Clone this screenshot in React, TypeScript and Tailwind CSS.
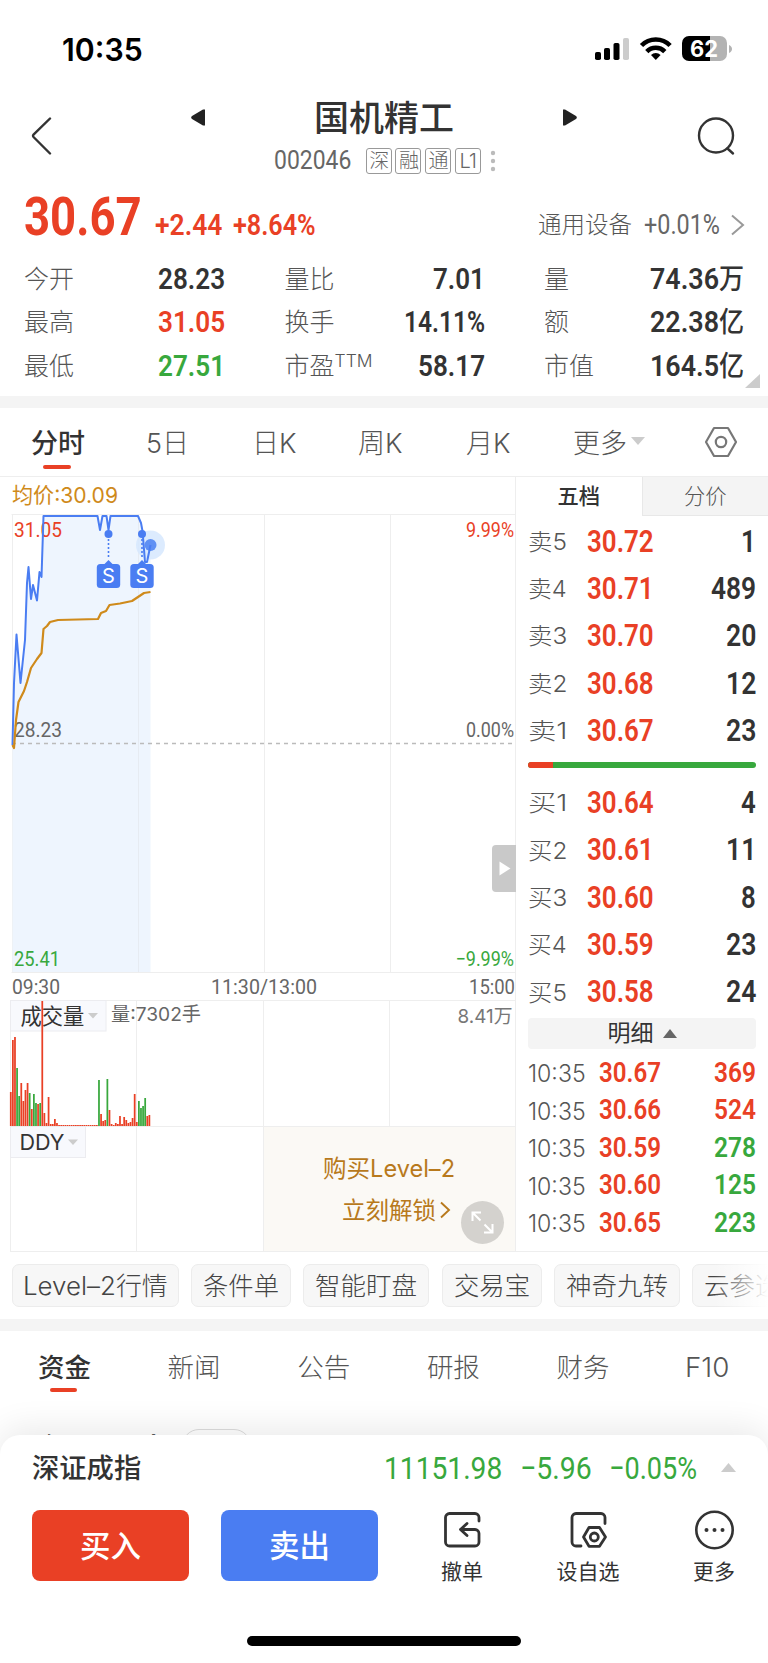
import clsx from 'clsx';
import { ReactNode, useLayoutEffect, useRef } from 'react';

const RED = '#e94025';
const GREEN = '#38a83d';
const BLUE = '#4a7df2';
const GOLD = '#cf8a1b';
const GRID = '#eeeeee';

interface FitProps {
  children: ReactNode;
  className?: string;
}

// 将文字横向缩放到容器宽度，模拟窄体数字
function Fit({ children, className }: FitProps) {
  const ref = useRef<HTMLSpanElement>(null);

  useLayoutEffect(() => {
    const fit = () => {
      const el = ref.current;
      if (!el || !el.parentElement || !el.offsetWidth) return;
      el.style.transform = `scaleX(${el.parentElement.clientWidth / el.offsetWidth})`;
    };
    fit();
    document.fonts?.ready.then(fit);
  }, []);

  return (
    <span className={clsx('flex shrink-0 leading-none whitespace-nowrap', className)}>
      <span ref={ref} className="inline-block shrink-0 origin-left">
        {children}
      </span>
    </span>
  );
}

const num = "font-['Roboto','Noto_Sans_CJK_SC',sans-serif]";

function StatusBar() {
  return (
    <div className="flex h-[97px] items-center justify-between pr-[36px] pl-[62px]">
      <Fit className="mt-[1px] w-[81px] text-[31px] font-semibold text-black">10:35</Fit>
      <svg width="138" height="26" viewBox="594 36 138 26">
        <rect x="595" y="52" width="6" height="8" rx="1.8" />
        <rect x="604" y="48" width="6" height="12" rx="1.8" />
        <rect x="613.5" y="43" width="6" height="17" rx="1.8" />
        <rect x="623" y="38" width="6" height="22" rx="1.8" fill="#cccccc" />
        <g fill="none" stroke="#000" strokeWidth="4.6">
          <path d="M641.5 45.500a20 20 0 0 1 28.600 0" />
          <path d="M646.800 51.600a12.600 12.600 0 0 1 18 0" />
        </g>
        <path d="M655.800 60l-4.800-5a7 7 0 0 1 9.600 0z" />
        <path d="M689 36h21v25h-21a7 7 0 0 1-7-7v-11a7 7 0 0 1 7-7z" />
        <path d="M710 36h10a7 7 0 0 1 7 7v11a7 7 0 0 1-7 7h-10z" fill="#b3b3b3" />
        <path d="M729 45c4 1.500 4 6.500 0 8z" fill="#b3b3b3" />
        <text x="690" y="56.800" fill="#fff" fontSize="22.500" fontWeight="700" textLength="28" lengthAdjust="spacingAndGlyphs">62</text>
      </svg>
    </div>
  );
}

function Header() {
  return (
    <header className="flex h-[87px] items-start justify-between pr-[31px] pl-[31px]">
      <div className="w-[40px] pt-[20px]">
        <svg width="22" height="40" viewBox="0 0 22 40" fill="none" stroke="#333" strokeWidth="2.400" strokeLinecap="round" strokeLinejoin="round">
          <path d="M19 1.500L2.500 17.700a1.600 1.600 0 0 0 0 2.300L19 36.500" />
        </svg>
      </div>
      <div className="flex w-[440px] flex-col items-center">
        <div className="flex h-[40px] w-full items-center justify-between px-[27px]">
          <svg width="15" height="17" viewBox="0 0 15 17" fill="#222">
            <path d="M14 .5v16h-2L1 10a2 2 0 0 1 0-3L12 .5z" />
          </svg>
          <h1 className="pt-[2px] text-[35px] leading-none font-medium text-[#333]">国机精工</h1>
          <svg width="15" height="17" viewBox="0 0 15 17" fill="#222">
            <path d="M1 .5v16h2L14 10a2 2 0 0 0 0-3L3 .5z" />
          </svg>
        </div>
        <div className="mt-[10px] flex h-[27px] items-center gap-[3.600px] pl-[3px]">
          <Fit className={clsx(num, 'mr-[11.500px] w-[77px] text-[25px] text-[#666]')}>002046</Fit>
          {['深', '融', '通', 'L1'].map((tag) => (
            <span key={tag} className="flex h-[26px] w-[26px] items-center justify-center rounded-[3px] border-[1.500px] border-[#999] text-[20px] leading-none font-light tracking-tighter text-[#666]">
              {tag}
            </span>
          ))}
          <svg className="ml-[5px]" width="8" height="22" fill="#bbb">
            <circle cx="4" cy="3" r="2.200" />
            <circle cx="4" cy="11" r="2.200" />
            <circle cx="4" cy="19" r="2.200" />
          </svg>
        </div>
      </div>
      <svg className="mt-[19px]" width="40" height="40" viewBox="0 0 40 40" fill="none" stroke="#333" strokeWidth="2.400" strokeLinecap="round">
        <circle cx="19" cy="19.500" r="17" />
        <path d="M30.500 32.500l5.500 5" />
      </svg>
    </header>
  );
}

interface Stat {
  label: string;
  value: string;
  width: string;
  unit?: string;
  color?: string;
  sup?: string;
}

const STATS: Stat[][] = [
  [
    { label: '今开', value: '28.23', width: 'w-[67px]' },
    { label: '最高', value: '31.05', width: 'w-[67px]', color: 'text-[#e94025]' },
    { label: '最低', value: '27.51', width: 'w-[67px]', color: 'text-[#38a83d]' },
  ],
  [
    { label: '量比', value: '7.01', width: 'w-[52px]' },
    { label: '换手', value: '14.11%', width: 'w-[81px]' },
    { label: '市盈', value: '58.17', width: 'w-[67px]', sup: 'TTM' },
  ],
  [
    { label: '量', value: '74.36', unit: '万', width: 'w-[94px]' },
    { label: '额', value: '22.38', unit: '亿', width: 'w-[94px]' },
    { label: '市值', value: '164.5', unit: '亿', width: 'w-[94px]' },
  ],
];

function Quote() {
  return (
    <section className="relative h-[212px]">
      <div className="flex h-[73px] items-end pr-[23px] pl-[24px]">
        <Fit className={clsx(num, 'mb-[13px] w-[118px] text-[54px] font-bold text-[#e94025]')}>30.67</Fit>
        <Fit className={clsx(num, 'mb-[17px] ml-[13px] w-[67px] text-[30px] font-semibold text-[#e94025]')}>+2.44</Fit>
        <Fit className={clsx(num, 'mb-[17px] ml-[11px] w-[83px] text-[30px] font-semibold text-[#e94025]')}>+8.64%</Fit>
        <div className="mb-[18px] ml-auto flex items-center text-[#555]">
          <span className="text-[23.500px] leading-none font-light">通用设备</span>
          <Fit className={clsx(num, 'ml-[12px] w-[76px] text-[28px] text-[#666]')}>+0.01%</Fit>
          <svg className="ml-[10px]" width="15" height="22" fill="none" stroke="#999" strokeWidth="2">
            <path d="M2 1.500l11 9.500-11 9.500" />
          </svg>
        </div>
      </div>
      <div className="flex justify-between pr-[24px] pl-[24px]">
        {STATS.map((column, i) => (
          <div key={i} className={clsx('flex flex-col', ['w-[201px]', 'w-[200px]', 'w-[200px]'][i])}>
            {column.map((stat) => (
              <div key={stat.label} className="flex h-[43.500px] items-center justify-between">
                <span className="flex pt-[1px] text-[25px] leading-none font-light text-[#555]">
                  {stat.label}
                  {stat.sup && <sup className="-top-[2px] self-start text-[17.500px] leading-none">{stat.sup}</sup>}
                </span>
                <Fit className={clsx(num, 'text-[30px] font-semibold', stat.width, stat.color ?? 'text-[#333]')}>
                  {stat.value}
                  {stat.unit && <span className="text-[28px] font-medium">{stat.unit}</span>}
                </Fit>
              </div>
            ))}
          </div>
        ))}
      </div>
      <svg className="absolute right-[8px] bottom-[8px]" width="15" height="14" fill="#ccc">
        <path d="M15 0v14H0z" />
      </svg>
    </section>
  );
}

function PeriodTabs() {
  return (
    <nav className="flex h-[69px] items-center border-b border-[#eee] pt-[2px] text-[27px] leading-none font-light text-[#555]">
      <span className="relative ml-[31px] w-[115px] font-medium text-[#333]">
        分时
        <span className="absolute -bottom-[12px] left-[12px] h-[4px] w-[28px] rounded-full bg-[#e94025]" />
      </span>
      <span className="w-[106px]">5日</span>
      <span className="w-[106px]">日K</span>
      <span className="w-[108px]">周K</span>
      <span className="w-[107px]">月K</span>
      <span className="flex w-[131px] items-center gap-[4px]">
        更多
        <svg className="-mt-[4px]" width="14" height="8" fill="#ccc">
          <path d="M0 0h14L7 8z" />
        </svg>
      </span>
      <svg className="-mt-[3px]" width="34" height="32" viewBox="0 0 34 32" fill="none" stroke="#777" strokeWidth="2.200" strokeLinejoin="round">
        <path d="M10 2h14l8 14-8 14H10L2 16z" />
        <circle cx="17" cy="16" r="5.200" />
      </svg>
    </nav>
  );
}

// 分时价格与均价折线，坐标相对图表左上角 (0, 477)
const PRICE_LINE =
  '12.500,268 14,206 16.500,157.500 20.500,206 25,163 27,106 28.500,90 31,122 33,108 37,123.500 39.500,95 41.500,100 43.500,39 97.500,39 100,53 102.500,39 106.500,39 108.500,53 110.500,39 138,39 141,46 142.500,54 145,85 147,85 150.500,68';
const AVG_LINE =
  '12.500,268 14,271 16,243 18.500,225 24,214 27,205 31,191 37,182 41.500,176 43.500,152 47,149 50,145 58,143 98,142 101,136 106,134 109.500,128 120,126.500 132,124 138,120 144,116 150.500,115';

interface ChartTextProps {
  x: number;
  y: number;
  w: number;
  fill: string;
  children: string;
}

function ChartText({ x, y, w, fill, children }: ChartTextProps) {
  return (
    <text x={x} y={y} fill={fill} fontSize="21" textLength={w} lengthAdjust="spacingAndGlyphs" className={num}>
      {children}
    </text>
  );
}

function PriceChart() {
  return (
    <svg className="block" width="516" height="523" viewBox="0 0 516 523">
      <text x="12" y="26" fill={GOLD} fontSize="21.500" textLength="106" lengthAdjust="spacingAndGlyphs">均价:30.09</text>
      <path d="M11.500 37.500H516M11.500 495.500H516M12.500 37V495M264.500 37V495M390.500 37V495M515.500 0V523" stroke={GRID} fill="none" />
      <polygon points={`12.500,495 ${PRICE_LINE} 150.500,495`} fill="#eef5fe" />
      <path d="M138.500 37V495" stroke="#e6ebf2" />
      <path d="M12 266.500H515" stroke="#bbb" strokeWidth="1.300" strokeDasharray="4 4" />
      <circle cx="150.500" cy="68" r="14.500" fill="#d6e8fe" fillOpacity=".85" />
      <circle cx="150.500" cy="68" r="6" fill="#5f90f4" />
      <ChartText x={14} y={60} w={48} fill={RED}>31.05</ChartText>
      <ChartText x={14} y={260} w={48} fill="#666">28.23</ChartText>
      <ChartText x={14} y={489} w={46} fill={GREEN}>25.41</ChartText>
      <ChartText x={466} y={60} w={48} fill={RED}>9.99%</ChartText>
      <ChartText x={466} y={260} w={48} fill="#666">0.00%</ChartText>
      <ChartText x={455.5} y={489} w={58.5} fill={GREEN}>−9.99%</ChartText>
      <ChartText x={12} y={517} w={48} fill="#666">09:30</ChartText>
      <ChartText x={211} y={517} w={106} fill="#666">11:30/13:00</ChartText>
      <ChartText x={469} y={517} w={46} fill="#666">15:00</ChartText>
      <polyline points={PRICE_LINE} fill="none" stroke={BLUE} strokeWidth="2" strokeLinejoin="round" />
      <polyline points={AVG_LINE} fill="none" stroke={GOLD} strokeWidth="2.200" strokeLinejoin="round" />
      {[108.5, 142].map((x) => (
        <g key={x} fill={BLUE}>
          <circle cx={x} cy="57" r="4" />
          <path d={`M${x} 62V80`} stroke={BLUE} strokeWidth="1.600" strokeDasharray="2 2" />
          <path d={`M${x - 5} 88l5-5 5 5z`} />
          <rect x={x - 11.7} y="87" width="23.400" height="24" rx="3.500" />
          <text x={x} y="106" fill="#fff" fontSize="20" textAnchor="middle">S</text>
        </g>
      ))}
      <path d="M516 368h-20a4 4 0 0 0-4 4v39a4 4 0 0 0 4 4h20z" fill="#c9c9c9" />
      <path d="M499.500 384.500v14l11-7z" fill="#fff" />
    </svg>
  );
}

// 正数为红柱，负数为绿柱
const VOLUME = [
  34, 86, 89, -58, -30, 43, 25, 36, 43, -33, 17, -32, -23, 22, -23, 125, 13, 3, 29, 2, 2, 7, 3,
  1, 1, 1, 1, 1, 1, 1, 1, 1, 1, 1, 1, 1, 1, 1, 1, 1, 1, 1, -46, 12, 5, 6, -47, 16, 2, 1, 3, 2,
  10, 2, 9, 6, 3, 4, 8, 32, 4, -25, -18, -20, -28, 10, 11,
];

function IndicatorPanels() {
  return (
    <svg className="block" width="516" height="252" viewBox="0 0 516 252">
      <rect x="264" y="127" width="251" height="125" fill="#fbf9f5" />
      <path d="M10 .5H516M10 126.500H516M10 251.500H516M10.500 0V252M136.500 0V252M263.500 0V252M389.500 0V126M515.500 0V252" stroke={GRID} fill="none" />
      <rect x="10.500" y=".5" width="95.500" height="30.500" fill="#f8f9fd" stroke="#ececf0" />
      <text x="20.500" y="24" fill="#333" fontSize="21.300">成交量</text>
      <path d="M88 13h10l-5 5.500z" fill="#ccc" />
      <text x="111" y="21" fill="#666" fontSize="19" textLength="90" lengthAdjust="spacingAndGlyphs">量:7302手</text>
      <text x="457.500" y="22.500" fill="#777" fontSize="19" textLength="55" lengthAdjust="spacingAndGlyphs">8.41万</text>
      {VOLUME.map((v, i) => (
        <rect key={i} x={9.9 + i * 2.1} y={126 - Math.abs(v)} width="1.750" height={Math.abs(v)} fill={v > 0 ? RED : GREEN} />
      ))}
      <rect x="10.500" y="126.500" width="75" height="31" fill="#f8f9fd" stroke="#ececf0" />
      <text x="19.500" y="150" fill="#333" fontSize="22" textLength="45" lengthAdjust="spacingAndGlyphs">DDY</text>
      <path d="M68 139.500h10l-5 5.500z" fill="#ccc" />
      <text x="323" y="177" fill="#b8791c" fontSize="24" textLength="132" lengthAdjust="spacingAndGlyphs">购买Level–2</text>
      <text x="342" y="218.500" fill="#b8791c" fontSize="23.500">立刻解锁</text>
      <path d="M441 202.500l8 7.500-8 7.500" fill="none" stroke="#b8791c" strokeWidth="1.900" />
      <circle cx="482.500" cy="222.500" r="21.500" fill="#d4d2ce" />
      <g fill="none" stroke="#fff" strokeWidth="2">
        <path d="M472.500 221v-8.500h8.500M472.500 212.500l8 8" />
        <path d="M492.500 224v8.500H484M492.500 232.500l-8-8" />
      </g>
    </svg>
  );
}

const SELLS = [
  { label: '卖5', price: '30.72', qty: '1' },
  { label: '卖4', price: '30.71', qty: '489' },
  { label: '卖3', price: '30.70', qty: '20' },
  { label: '卖2', price: '30.68', qty: '12' },
  { label: '卖1', price: '30.67', qty: '23' },
];

const BUYS = [
  { label: '买1', price: '30.64', qty: '4' },
  { label: '买2', price: '30.61', qty: '11' },
  { label: '买3', price: '30.60', qty: '8' },
  { label: '买4', price: '30.59', qty: '23' },
  { label: '买5', price: '30.58', qty: '24' },
];

const DEALS = [
  { price: '30.67', qty: '369', up: true },
  { price: '30.66', qty: '524', up: true },
  { price: '30.59', qty: '278', up: false },
  { price: '30.60', qty: '125', up: false },
  { price: '30.65', qty: '223', up: false },
];

const QTY_WIDTH = ['', 'w-[15px]', 'w-[30px]', 'w-[45px]'];

function Level({ label, price, qty }: { label: string; price: string; qty: string }) {
  return (
    <div className="flex h-[47.300px] items-center">
      <Fit className="mt-[2px] w-[39px] text-[22.500px] font-light text-[#555]">{label}</Fit>
      <Fit className={clsx(num, 'ml-[19.500px] w-[67px] text-[31px] font-semibold text-[#e94025]')}>{price}</Fit>
      <Fit className={clsx(num, 'ml-auto text-[31px] font-semibold text-[#333]', QTY_WIDTH[qty.length])}>{qty}</Fit>
    </div>
  );
}

function OrderBook() {
  return (
    <aside className="flex flex-1 flex-col border-b border-[#eee]">
      <div className="flex h-[39px] text-[21.300px] leading-none">
        <span className="flex flex-1 items-center justify-center pt-[1px] font-medium text-[#333]">五档</span>
        <span className="flex flex-1 items-center justify-center border-b border-l border-[#e8e8e8] bg-[#f4f4f4] pt-[2px] font-light text-[#555]">分价</span>
      </div>
      <div className="flex flex-col pr-[12px] pl-[12px]">
        <div className="mt-[1.500px]">
          {SELLS.map((row) => (
            <Level key={row.label} {...row} />
          ))}
        </div>
        <div className="mt-[8.500px] flex h-[6px] overflow-hidden rounded-full bg-[#38a83d]">
          <span className="w-[25px] bg-[#e94025]" />
        </div>
        <div className="mt-[10.500px]">
          {BUYS.map((row) => (
            <Level key={row.label} {...row} />
          ))}
        </div>
        <div className="mt-[2.500px] flex h-[31px] items-center justify-center gap-[9px] rounded-[4px] bg-[#f4f4f4] text-[23px] leading-none text-[#333]">
          明细
          <svg width="14" height="9" fill="#666">
            <path d="M7 0l7 9H0z" />
          </svg>
        </div>
        <div className="mt-[5px]">
          {DEALS.map((deal, i) => (
            <div key={i} className="flex h-[37.500px] items-center">
              <Fit className="mt-[3px] w-[58px] text-[23.500px] font-light text-[#555]">10:35</Fit>
              <Fit className={clsx(num, 'ml-[12.500px] w-[62px] text-[28px] font-semibold text-[#e94025]')}>{deal.price}</Fit>
              <Fit className={clsx(num, 'ml-auto w-[42px] text-[28px] font-semibold', deal.up ? 'text-[#e94025]' : 'text-[#38a83d]')}>
                {deal.qty}
              </Fit>
            </div>
          ))}
        </div>
      </div>
    </aside>
  );
}

const TOOLS = [
  { name: 'Level–2行情', box: 'w-[167px]', text: 'w-[145px]' },
  { name: '条件单', box: 'w-[100px]', text: 'w-[76px]' },
  { name: '智能盯盘', box: 'w-[126px]', text: 'w-[102px]' },
  { name: '交易宝', box: 'w-[100px]', text: 'w-[76px]' },
  { name: '神奇九转', box: 'w-[126px]', text: 'w-[102px]' },
  { name: '云参选股', box: 'w-[126px]', text: 'w-[102px]' },
];

function ToolChips() {
  return (
    <div className="relative flex h-[67px] gap-[12.200px] overflow-hidden pt-[12px] pl-[12px]">
      {TOOLS.map((tool) => (
        <span key={tool.name} className={clsx('flex h-[43px] shrink-0 items-center justify-center rounded-[7px] border border-[#ececec] bg-[#f7f7f7] pt-[2px] text-[25px] font-light text-[#444]', tool.box)}>
          <Fit className={tool.text}>{tool.name}</Fit>
        </span>
      ))}
      <span className="absolute top-0 right-0 h-full w-[54px] bg-linear-to-r from-white/0 to-white" />
    </div>
  );
}

function NewsTabs() {
  return (
    <nav className="flex h-[104px] items-start pt-[23px] text-[26.500px] leading-none font-light text-[#555]">
      <span className="relative ml-[38px] w-[129.500px] font-medium text-[#333]">
        资金
        <span className="absolute -bottom-[11px] left-[12px] h-[4px] w-[27px] rounded-full bg-[#e94025]" />
      </span>
      {['新闻', '公告', '研报', '财务'].map((tab) => (
        <span key={tab} className="w-[129.700px]">
          {tab}
        </span>
      ))}
      <Fit className="-ml-[1px] w-[44px]">F10</Fit>
    </nav>
  );
}

function BottomBar() {
  return (
    <footer className="relative flex h-[228px] flex-col rounded-t-[20px] bg-white shadow-[0_-6px_34px_rgba(0,0,0,0.09)]">
      <div className="flex h-[65px] items-center pr-[32px] pl-[32px]">
        <span className="pt-[3px] text-[27.300px] leading-none font-medium text-[#333]">深证成指</span>
        <Fit className={clsx(num, 'ml-auto w-[118px] text-[32px] text-[#38a83d]')}>11151.98</Fit>
        <Fit className={clsx(num, 'ml-[18px] w-[72px] text-[32px] text-[#38a83d]')}>−5.96</Fit>
        <Fit className={clsx(num, 'ml-[17px] w-[88px] text-[32px] text-[#38a83d]')}>−0.05%</Fit>
        <svg className="ml-[24px]" width="15" height="9" fill="#ccc">
          <path d="M7.500 0L15 9H0z" />
        </svg>
      </div>
      <div className="mt-[10px] flex items-start pl-[32px]">
        <button className="h-[71px] w-[157px] rounded-[8px] bg-[#e94025] pt-[2px] text-[30.500px] leading-none font-medium text-white">买入</button>
        <button className="ml-[32px] h-[71px] w-[157px] rounded-[8px] bg-[#4a7df2] pt-[2px] text-[30.500px] leading-none font-medium text-white">卖出</button>
        <div className="ml-[52px] flex w-[64px] flex-col items-center gap-[11px] text-[21px] leading-none text-[#333]">
          <svg width="40" height="40" viewBox="0 0 40 40" fill="none" stroke="#333" strokeWidth="2.800" strokeLinecap="round" strokeLinejoin="round">
            <path d="M37 11V7.500a4 4 0 0 0-4-4H7.500a4 4 0 0 0-4 4v24.500a4 4 0 0 0 4 4H33a4 4 0 0 0 4-4V23.500a4 4 0 0 0-4-4H18.500M25 13.500L18.500 19.500l6.500 6" />
          </svg>
          撤单
        </div>
        <div className="ml-[62px] flex w-[64px] flex-col items-center gap-[11px] text-[21px] leading-none text-[#333]">
          <svg width="40" height="40" viewBox="0 0 40 40" fill="none" stroke="#333" strokeWidth="2.800" strokeLinecap="round" strokeLinejoin="round">
            <path d="M37 13.500V7.500a4 4 0 0 0-4-4H8a4 4 0 0 0-4 4v24.500a4 4 0 0 0 4 4h5" />
            <path d="M21 17.500h10.500L37.500 27l-6 9.300H21L15.500 27z" />
            <circle cx="26.300" cy="27" r="4" />
          </svg>
          设自选
        </div>
        <div className="ml-[62px] flex w-[64px] flex-col items-center gap-[11px] text-[21px] leading-none text-[#333]">
          <svg width="40" height="40" viewBox="0 0 40 40" fill="none" stroke="#333" strokeWidth="2.600">
            <circle cx="20.500" cy="20" r="18.200" />
            <g fill="#333" stroke="none">
              <circle cx="12.500" cy="20" r="2" />
              <circle cx="20.500" cy="20" r="2" />
              <circle cx="28.500" cy="20" r="2" />
            </g>
          </svg>
          更多
        </div>
      </div>
      <div className="mx-auto mt-auto mb-[17px] h-[10px] w-[274px] rounded-full bg-black" />
    </footer>
  );
}

export default function App() {
  return (
    <div className="relative flex h-[1663px] w-[768px] flex-col overflow-hidden bg-white font-['Inter','Noto_Sans_CJK_SC',sans-serif]">
      <StatusBar />
      <Header />
      <Quote />
      <div className="h-[12px] shrink-0 bg-[#f4f4f4]" />
      <PeriodTabs />
      <main className="flex">
        <div className="flex w-[516px] flex-col">
          <PriceChart />
          <IndicatorPanels />
        </div>
        <OrderBook />
      </main>
      <ToolChips />
      <div className="h-[12px] shrink-0 bg-[#f4f4f4]" />
      <div className="h-[104px] shrink-0 overflow-hidden">
        <NewsTabs />
      </div>
      <div className="relative">
        <div className="absolute -top-[6px] left-[32px] flex items-start">
          <span className="mt-[5px] text-[33px] leading-none font-medium text-[#333]">个股异动</span>
          <span className="ml-[18px] h-[34px] w-[69px] rounded-full border border-[#ddd]" />
        </div>
        <BottomBar />
      </div>
    </div>
  );
}
